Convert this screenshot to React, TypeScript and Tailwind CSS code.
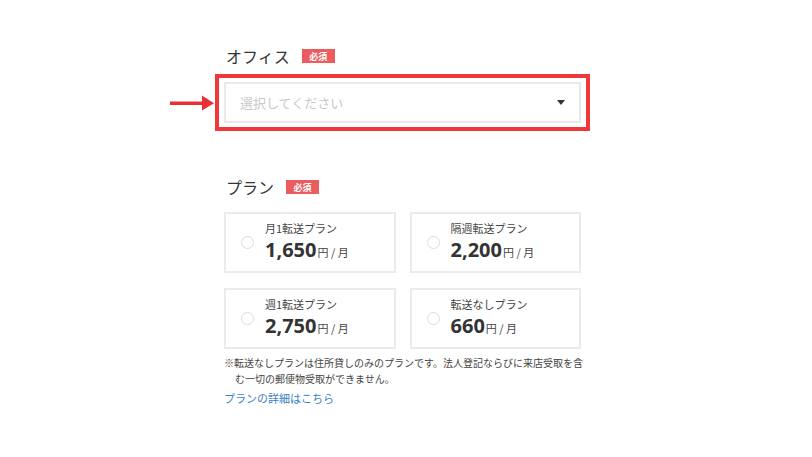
import React from "react";

const plans = [
  { name: "月1転送プラン", price: "1,650" },
  { name: "隔週転送プラン", price: "2,200" },
  { name: "週1転送プラン", price: "2,750" },
  { name: "転送なしプラン", price: "660" },
];

function Badge() {
  return (
    <span className="ml-[12px] inline-flex h-[14px] w-[33px] items-center justify-center bg-[#ec5b5d] text-[9px] leading-none font-bold text-white">
      必須
    </span>
  );
}

export default function App() {
  return (
    <div
      className="h-[457px] w-[812px] bg-white text-[#333]"
      style={{ fontFamily: '"Noto Sans CJK JP", "Noto Sans", sans-serif' }}
    >
      <div className="pl-[170px] pt-[44px]">
        <div className="flex h-[24px] items-center pl-[56px]">
          <span className="text-[16px] leading-[24px] text-[#333]">オフィス</span>
          <Badge />
        </div>
        <div className="mt-[6px] flex items-center">
          <svg width="45" height="16" viewBox="0 0 45 16" className="shrink-0">
            <rect x="0" y="6.5" width="36" height="3.5" fill="#ec2f34" />
            <polygon points="32,0.5 44,8.2 32,15.5" fill="#ec2f34" />
          </svg>
          <div className="w-[375px] border-4 border-[#f03838] px-[5px] py-[4px]">
            <div className="flex h-[41px] items-center justify-between border-2 border-[#e9e9e9] bg-white pl-[14px] pr-[14px]">
              <span className="text-[13px] text-[#c8c8c8]">選択してください</span>
              <svg width="8" height="5" viewBox="0 0 8 5">
                <polygon points="0,0 8,0 4,5" fill="#333" />
              </svg>
            </div>
          </div>
        </div>
        <div className="ml-[54px] w-[357px]">
          <div className="mt-[44px] flex h-[24px] items-center pl-[2px]">
            <span className="text-[16px] leading-[24px] text-[#333]">プラン</span>
            <Badge />
          </div>
          <div className="mt-[13px] grid grid-cols-2 gap-x-[14px] gap-y-[15px]">
            {plans.map((p) => (
              <div
                key={p.name}
                className="flex h-[61px] items-center gap-[11px] border-2 border-[#ebebeb] pl-[15px]"
              >
                <span className="h-[13px] w-[13px] shrink-0 rounded-full border border-[#dcdcdc] bg-white" />
                <div className="flex flex-col">
                  <span className="text-[11px] leading-[14px] text-[#444]">{p.name}</span>
                  <div className="mt-[3px] flex items-baseline leading-[24px]">
                    <span
                      className="text-[20px] font-bold text-[#333]"
                      style={{ fontFamily: '"Noto Sans", sans-serif' }}
                    >
                      {p.price}
                    </span>
                    <span className="ml-[1px] text-[11px] text-[#444]">円 / 月</span>
                  </div>
                </div>
              </div>
            ))}
          </div>
          <p className="mt-[6px] w-[362px] pl-[11px] -indent-[11px] text-[10px] leading-[16px] text-[#444]">
            ※転送なしプランは住所貸しのみのプランです。法人登記ならびに来店受取を含む一切の郵便物受取ができません。
          </p>
          <a className="mt-[3px] block text-[11px] leading-[16px] text-[#3a7fc8]">
            プランの詳細はこちら
          </a>
        </div>
      </div>
    </div>
  );
}
